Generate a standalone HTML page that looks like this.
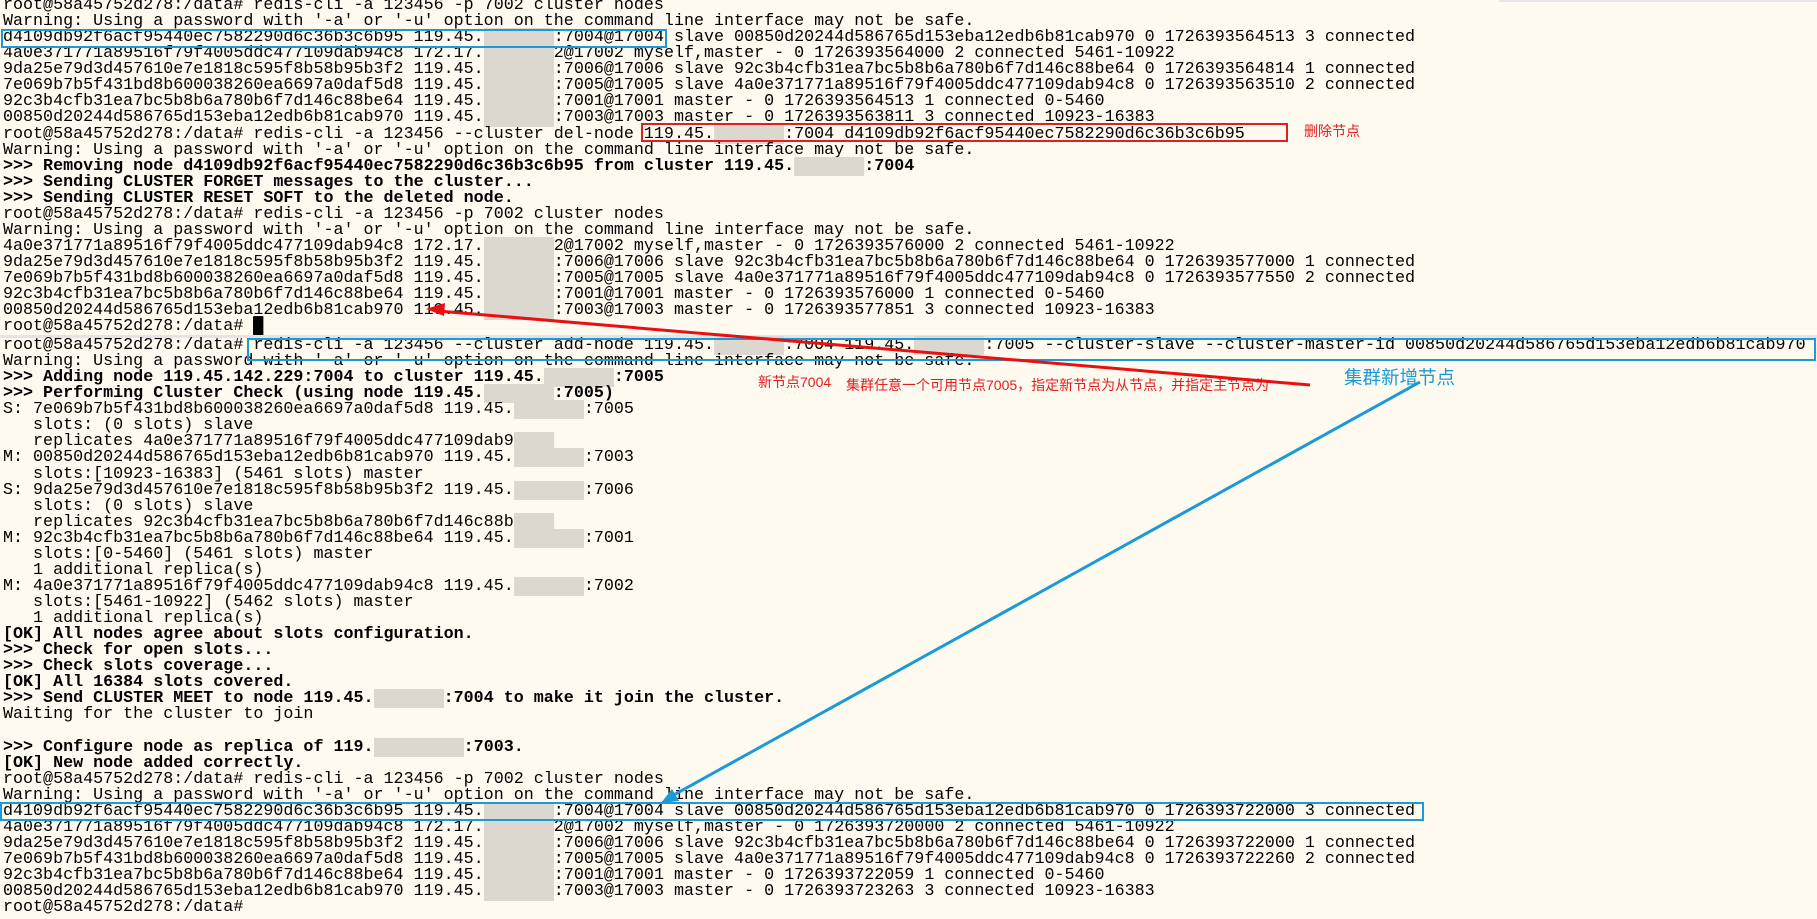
<!DOCTYPE html>
<html><head><meta charset="utf-8">
<style>
html,body{margin:0;padding:0;width:1817px;height:919px;overflow:hidden;background:#fffaf0;}
.blk{position:absolute;left:3px;font-family:"Liberation Mono",monospace;font-size:16.7px;line-height:16.07px;color:#000;white-space:pre;}
.blk b{font-weight:bold;}
.x{background:#dcd8d0;color:transparent;}
.box{position:absolute;border:2px solid;box-sizing:border-box;}
.lbl{position:absolute;font-family:"Liberation Sans","Noto Sans CJK SC",sans-serif;white-space:nowrap;}
</style></head><body>
<div style="position:absolute;left:1499px;top:0;width:318px;height:2px;background:#e6e6e6"></div>
<div class="blk" style="top:-2px">root@58a45752d278:/data# redis-cli -a 123456 -p 7002 cluster nodes
Warning: Using a password with '-a' or '-u' option on the command line interface may not be safe.
d4109db92f6acf95440ec7582290d6c36b3c6b95 119.45.<span class="x">XXXXXXX</span>:7004@17004 slave 00850d20244d586765d153eba12edb6b81cab970 0 1726393564513 3 connected
4a0e371771a89516f79f4005ddc477109dab94c8 172.17.<span class="x">XXXXXXX</span>2@17002 myself,master - 0 1726393564000 2 connected 5461-10922
9da25e79d3d457610e7e1818c595f8b58b95b3f2 119.45.<span class="x">XXXXXXX</span>:7006@17006 slave 92c3b4cfb31ea7bc5b8b6a780b6f7d146c88be64 0 1726393564814 1 connected
7e069b7b5f431bd8b600038260ea6697a0daf5d8 119.45.<span class="x">XXXXXXX</span>:7005@17005 slave 4a0e371771a89516f79f4005ddc477109dab94c8 0 1726393563510 2 connected
92c3b4cfb31ea7bc5b8b6a780b6f7d146c88be64 119.45.<span class="x">XXXXXXX</span>:7001@17001 master - 0 1726393564513 1 connected 0-5460
00850d20244d586765d153eba12edb6b81cab970 119.45.<span class="x">XXXXXXX</span>:7003@17003 master - 0 1726393563811 3 connected 10923-16383
root@58a45752d278:/data# redis-cli -a 123456 --cluster del-node 119.45.<span class="x">XXXXXXX</span>:7004 d4109db92f6acf95440ec7582290d6c36b3c6b95
Warning: Using a password with '-a' or '-u' option on the command line interface may not be safe.
<b>&gt;&gt;&gt; Removing node d4109db92f6acf95440ec7582290d6c36b3c6b95 from cluster 119.45.<span class="x">XXXXXXX</span>:7004</b>
<b>&gt;&gt;&gt; Sending CLUSTER FORGET messages to the cluster...</b>
<b>&gt;&gt;&gt; Sending CLUSTER RESET SOFT to the deleted node.</b>
root@58a45752d278:/data# redis-cli -a 123456 -p 7002 cluster nodes
Warning: Using a password with '-a' or '-u' option on the command line interface may not be safe.
4a0e371771a89516f79f4005ddc477109dab94c8 172.17.<span class="x">XXXXXXX</span>2@17002 myself,master - 0 1726393576000 2 connected 5461-10922
9da25e79d3d457610e7e1818c595f8b58b95b3f2 119.45.<span class="x">XXXXXXX</span>:7006@17006 slave 92c3b4cfb31ea7bc5b8b6a780b6f7d146c88be64 0 1726393577000 1 connected
7e069b7b5f431bd8b600038260ea6697a0daf5d8 119.45.<span class="x">XXXXXXX</span>:7005@17005 slave 4a0e371771a89516f79f4005ddc477109dab94c8 0 1726393577550 2 connected
92c3b4cfb31ea7bc5b8b6a780b6f7d146c88be64 119.45.<span class="x">XXXXXXX</span>:7001@17001 master - 0 1726393576000 1 connected 0-5460
00850d20244d586765d153eba12edb6b81cab970 119.45.<span class="x">XXXXXXX</span>:7003@17003 master - 0 1726393577851 3 connected 10923-16383
root@58a45752d278:/data# <span style="background:#000">█</span></div>
<div style="position:absolute;left:0;top:335px;width:1817px;height:3px;background:#e4e4e4"></div>
<div class="blk" style="top:338px">root@58a45752d278:/data# redis-cli -a 123456 --cluster add-node 119.45.<span class="x">XXXXXXX</span>:7004 119.45.<span class="x">XXXXXXX</span>:7005 --cluster-slave --cluster-master-id 00850d20244d586765d153eba12edb6b81cab970
Warning: Using a password with '-a' or '-u' option on the command line interface may not be safe.
<b>&gt;&gt;&gt; Adding node 119.45.142.229:7004 to cluster 119.45.<span class="x">XXXXXXX</span>:7005</b>
<b>&gt;&gt;&gt; Performing Cluster Check (using node 119.45.<span class="x">XXXXXXX</span>:7005)</b>
S: 7e069b7b5f431bd8b600038260ea6697a0daf5d8 119.45.<span class="x">XXXXXXX</span>:7005
   slots: (0 slots) slave
   replicates 4a0e371771a89516f79f4005ddc477109dab9<span class="x">XXXX</span>
M: 00850d20244d586765d153eba12edb6b81cab970 119.45.<span class="x">XXXXXXX</span>:7003
   slots:[10923-16383] (5461 slots) master
S: 9da25e79d3d457610e7e1818c595f8b58b95b3f2 119.45.<span class="x">XXXXXXX</span>:7006
   slots: (0 slots) slave
   replicates 92c3b4cfb31ea7bc5b8b6a780b6f7d146c88b<span class="x">XXXX</span>
M: 92c3b4cfb31ea7bc5b8b6a780b6f7d146c88be64 119.45.<span class="x">XXXXXXX</span>:7001
   slots:[0-5460] (5461 slots) master
   1 additional replica(s)
M: 4a0e371771a89516f79f4005ddc477109dab94c8 119.45.<span class="x">XXXXXXX</span>:7002
   slots:[5461-10922] (5462 slots) master
   1 additional replica(s)
<b>[OK] All nodes agree about slots configuration.</b>
<b>&gt;&gt;&gt; Check for open slots...</b>
<b>&gt;&gt;&gt; Check slots coverage...</b>
<b>[OK] All 16384 slots covered.</b>
<b>&gt;&gt;&gt; Send CLUSTER MEET to node 119.45.<span class="x">XXXXXXX</span>:7004 to make it join the cluster.</b>
Waiting for the cluster to join

<b>&gt;&gt;&gt; Configure node as replica of 119.<span class="x">XXXXXXXXX</span>:7003.</b>
<b>[OK] New node added correctly.</b>
root@58a45752d278:/data# redis-cli -a 123456 -p 7002 cluster nodes
Warning: Using a password with '-a' or '-u' option on the command line interface may not be safe.
d4109db92f6acf95440ec7582290d6c36b3c6b95 119.45.<span class="x">XXXXXXX</span>:7004@17004 slave 00850d20244d586765d153eba12edb6b81cab970 0 1726393722000 3 connected
4a0e371771a89516f79f4005ddc477109dab94c8 172.17.<span class="x">XXXXXXX</span>2@17002 myself,master - 0 1726393720000 2 connected 5461-10922
9da25e79d3d457610e7e1818c595f8b58b95b3f2 119.45.<span class="x">XXXXXXX</span>:7006@17006 slave 92c3b4cfb31ea7bc5b8b6a780b6f7d146c88be64 0 1726393722000 1 connected
7e069b7b5f431bd8b600038260ea6697a0daf5d8 119.45.<span class="x">XXXXXXX</span>:7005@17005 slave 4a0e371771a89516f79f4005ddc477109dab94c8 0 1726393722260 2 connected
92c3b4cfb31ea7bc5b8b6a780b6f7d146c88be64 119.45.<span class="x">XXXXXXX</span>:7001@17001 master - 0 1726393722059 1 connected 0-5460
00850d20244d586765d153eba12edb6b81cab970 119.45.<span class="x">XXXXXXX</span>:7003@17003 master - 0 1726393723263 3 connected 10923-16383
root@58a45752d278:/data#</div>

<div class="box" style="left:1px;top:29px;width:666px;height:19px;border-color:#1a9ad6"></div>
<div class="box" style="left:641px;top:123px;width:647px;height:19px;border-color:#e02020"></div>
<div class="lbl" style="left:1304px;top:121px;font-size:14px;color:#e02020">删除节点</div>
<div class="box" style="left:247px;top:338px;width:1569px;height:23px;border-color:#1a9ad6"></div>
<div class="box" style="left:0px;top:802px;width:1424px;height:19px;border-color:#1a9ad6"></div>
<div class="lbl" style="left:758px;top:372px;font-size:14px;color:#e02020">新节点7004</div>
<div class="lbl" style="left:846px;top:375px;font-size:14px;color:#e02020">集群任意一个可用节点7005，指定新节点为从节点，并指定主节点为</div>
<div class="lbl" style="left:1344px;top:364px;font-size:18.5px;color:#1a9ad6">集群新增节点</div>
<svg style="position:absolute;left:0;top:0" width="1817" height="919">
<line x1="1310" y1="385" x2="438" y2="311" stroke="#e81010" stroke-width="3"/>
<polygon points="426,309 445,303 444,316" fill="#e81010"/>
<line x1="1420" y1="382" x2="670" y2="797" stroke="#1a9ad6" stroke-width="3"/>
<polygon points="661,803 672,789 679,801" fill="#1a9ad6"/>
</svg>
</body></html>
